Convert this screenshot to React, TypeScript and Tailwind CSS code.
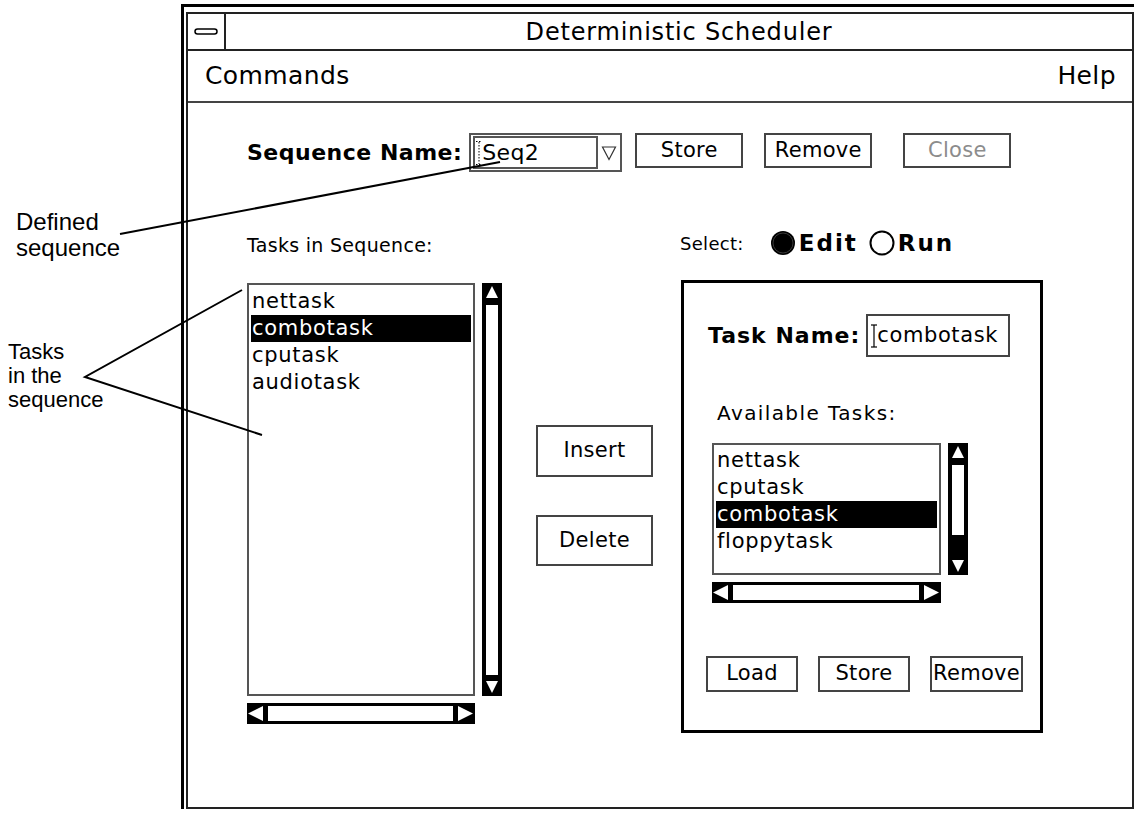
import React from 'react';

const UI = "font-['DejaVu_Sans',sans-serif]";

function VScroll({ className, band }: { className: string; band: string }) {
  return (
    <div className={`flex w-[20px] shrink-0 flex-col bg-black ${className}`}>
      <svg width="20" height="19" viewBox="0 0 20 19" className="shrink-0">
        <polygon points="10,3 4,15 16,15" fill="#fff" />
      </svg>
      <div className="mx-[4px] mt-[3px] flex-1 bg-white" />
      <div className={band} />
      <svg width="20" height="16" viewBox="0 0 20 16" className="shrink-0">
        <polygon points="4,1 16,1 10,13" fill="#fff" />
      </svg>
    </div>
  );
}

function HScroll({ className }: { className: string }) {
  return (
    <div className={`flex h-[21px] items-stretch bg-black py-[3px] ${className}`}>
      <svg width="17" height="15" viewBox="0 0 17 15" className="shrink-0">
        <polygon points="1,7.5 16,0 16,15" fill="#fff" />
      </svg>
      <div className="ml-[4px] mr-[2px] flex-1 bg-white" />
      <svg width="20" height="15" viewBox="0 0 20 15" className="shrink-0">
        <polygon points="3,0 18,7.5 3,15" fill="#fff" />
      </svg>
    </div>
  );
}

function ListBox({ items, selected, className }: { items: string[]; selected: string; className: string }) {
  return (
    <div className={`shrink-0 border-2 border-[#555] bg-white ${className}`}>
      {items.map((t) => (
        <div
          key={t}
          className={`h-[27px] pl-[1px] text-[21px] leading-[27px] tracking-[0.7px] ${t === selected ? 'bg-black text-white' : 'text-black'}`}
        >
          {t}
        </div>
      ))}
    </div>
  );
}

function Btn({ label, className, disabled }: { label: string; className: string; disabled?: boolean }) {
  return (
    <button
      type="button"
      className={`flex shrink-0 items-center justify-center border-2 border-[#444] bg-white text-[21px] tracking-[0.3px] ${disabled ? 'text-[#8c8c8c]' : 'text-black'} ${className}`}
    >
      {label}
    </button>
  );
}

export default function App() {
  return (
    <div className="relative flex h-[813px] w-[1139px] overflow-hidden bg-white text-black">
      {/* callout labels */}
      <div className="w-[181px] shrink-0 font-['Liberation_Sans',Arial,sans-serif]">
        <div className="pl-[16px] pt-[209px] text-[24px] leading-[26px]">
          <div>Defined</div>
          <div>sequence</div>
        </div>
        <div className="pl-[8px] pt-[79px] text-[22px] leading-[24px]">
          <div>Tasks</div>
          <div>in the</div>
          <div>sequence</div>
        </div>
      </div>

      {/* window */}
      <div className={`${UI} mt-[4px] flex h-[805px] w-[953px] shrink-0 flex-col border-l-[3px] border-t-[3px] border-black pl-[2px] pt-[5px]`}>
        <div className="flex flex-1 flex-col border-2 border-[#222]">
          <div className="flex h-[37px] shrink-0 border-b-2 border-[#222]">
            <div className="flex w-[38px] items-center justify-center border-r-2 border-[#222]">
              <svg width="24" height="7" viewBox="0 0 24 7">
                <rect x="1" y="1" width="22" height="5" rx="2.5" fill="none" stroke="#000" strokeWidth="1.5" />
              </svg>
            </div>
            <div className="flex flex-1 items-center justify-center text-[24px] tracking-[0.8px]">Deterministic Scheduler</div>
          </div>

          <div className="flex h-[52px] shrink-0 items-center justify-between border-b-2 border-[#444] pl-[17px] pr-[16px] text-[25px] tracking-[0.4px]">
            <span>Commands</span>
            <span>Help</span>
          </div>

          <div className="flex-1 pl-[59px] pt-[30px]">
            {/* sequence row */}
            <div className="flex h-[39px] items-center">
              <span className="text-[22px] font-bold tracking-[0.5px]">Sequence Name:</span>
              <div className="ml-[7px] flex h-[39px] w-[153px] border-2 border-[#555] py-[1px] pl-[2px]">
                <div className="flex w-[125px] items-center border-2 border-[#555] pl-[1px]">
                  <svg width="6" height="26" viewBox="0 0 6 26" className="shrink-0">
                    <g stroke="#000" strokeWidth="1" strokeDasharray="1.5 1.5" fill="none">
                      <line x1="3" y1="2" x2="3" y2="24" />
                      <line x1="0" y1="1.5" x2="6" y2="1.5" />
                      <line x1="0" y1="24.5" x2="6" y2="24.5" />
                    </g>
                  </svg>
                  <span className="text-[22px] tracking-[0.3px]">Seq2</span>
                </div>
                <div className="flex flex-1 items-center justify-center">
                  <svg width="16" height="16" viewBox="0 0 16 16">
                    <polygon points="1.5,2 14.5,2 8,14.5" fill="none" stroke="#333" strokeWidth="1.2" />
                  </svg>
                </div>
              </div>
              <Btn label="Store" className="ml-[13px] h-[35px] w-[108px] self-start" />
              <Btn label="Remove" className="ml-[21px] h-[35px] w-[108px] self-start" />
              <Btn label="Close" disabled className="ml-[31px] h-[35px] w-[108px] self-start" />
            </div>

            <div className="flex items-start">
              {/* tasks in sequence */}
              <div className="flex w-[255px] shrink-0 flex-col">
                <div className="mt-[61px] h-[24px] text-[19px] leading-[24px] tracking-[0.3px]">Tasks in Sequence:</div>
                <div className="mt-[26px] flex gap-[7px]">
                  <ListBox
                    items={['nettask', 'combotask', 'cputask', 'audiotask']}
                    selected="combotask"
                    className="h-[413px] w-[228px] px-[2px] pt-[3px]"
                  />
                  <VScroll className="h-[413px]" band="h-[5px] shrink-0" />
                </div>
                <HScroll className="mt-[7px] w-[228px]" />
              </div>

              {/* insert / delete */}
              <div className="ml-[34px] mt-[253px] flex shrink-0 flex-col">
                <Btn label="Insert" className="h-[52px] w-[117px]" />
                <Btn label="Delete" className="mt-[38px] h-[51px] w-[117px]" />
              </div>

              {/* edit panel */}
              <div className="ml-[28px] mt-[56px] flex shrink-0 flex-col">
                <div className="-ml-[1px] flex h-[30px] items-center">
                  <span className="text-[18px] tracking-[0.3px]">Select:</span>
                  <svg width="26" height="26" viewBox="0 0 26 26" className="ml-[26px] shrink-0">
                    <circle cx="13" cy="13" r="12" fill="#000" />
                    <circle cx="13" cy="13" r="10" fill="none" stroke="#3a3a3a" strokeWidth="1" />
                  </svg>
                  <span className="ml-[3px] text-[23px] font-bold tracking-[2px]">Edit</span>
                  <svg width="26" height="26" viewBox="0 0 26 26" className="ml-[11px] shrink-0">
                    <circle cx="13" cy="13" r="11.5" fill="#fff" stroke="#000" strokeWidth="2" />
                  </svg>
                  <span className="ml-[3px] text-[23px] font-bold tracking-[2px]">Run</span>
                </div>

                <div className="mt-[22px] flex h-[453px] w-[362px] flex-col border-[3px] border-black pt-[31px]">
                  <div className="ml-[24px] flex h-[43px] items-center">
                    <span className="text-[22px] font-bold tracking-[1px]">Task Name:</span>
                    <div className="ml-[6px] flex h-[43px] w-[144px] items-center border-2 border-[#444] pl-[3px]">
                      <svg width="6" height="24" viewBox="0 0 6 24" className="shrink-0">
                        <g stroke="#000" strokeWidth="1.2" fill="none">
                          <line x1="3" y1="1" x2="3" y2="23" />
                          <line x1="0" y1="1" x2="6" y2="1" />
                          <line x1="0" y1="23" x2="6" y2="23" />
                        </g>
                      </svg>
                      <span className="text-[21px] tracking-[0.6px]">combotask</span>
                    </div>
                  </div>

                  <div className="ml-[33px] mt-[44px] h-[24px] text-[20px] leading-[24px] tracking-[1.4px]">Available Tasks:</div>

                  <div className="ml-[28px] mt-[18px] flex gap-[7px]">
                    <ListBox
                      items={['nettask', 'cputask', 'combotask', 'floppytask']}
                      selected="combotask"
                      className="h-[132px] w-[229px] pl-[2px] pr-[2px] pt-[2px]"
                    />
                    <VScroll className="h-[132px]" band="h-[24px] shrink-0" />
                  </div>
                  <HScroll className="ml-[28px] mt-[7px] w-[229px]" />

                  <div className="ml-[22px] mt-[53px] flex gap-[20px]">
                    <Btn label="Load" className="h-[36px] w-[92px]" />
                    <Btn label="Store" className="h-[36px] w-[92px]" />
                    <Btn label="Remove" className="h-[36px] w-[93px]" />
                  </div>
                </div>
              </div>
            </div>
          </div>
        </div>
      </div>

      {/* callout leader lines */}
      <svg className="pointer-events-none absolute left-0 top-0" width="1139" height="813" viewBox="0 0 1139 813">
        <line x1="120" y1="234" x2="500" y2="162" stroke="#000" strokeWidth="2" />
        <polyline points="242,290 85,377 262,435" fill="none" stroke="#000" strokeWidth="2" />
      </svg>
    </div>
  );
}
